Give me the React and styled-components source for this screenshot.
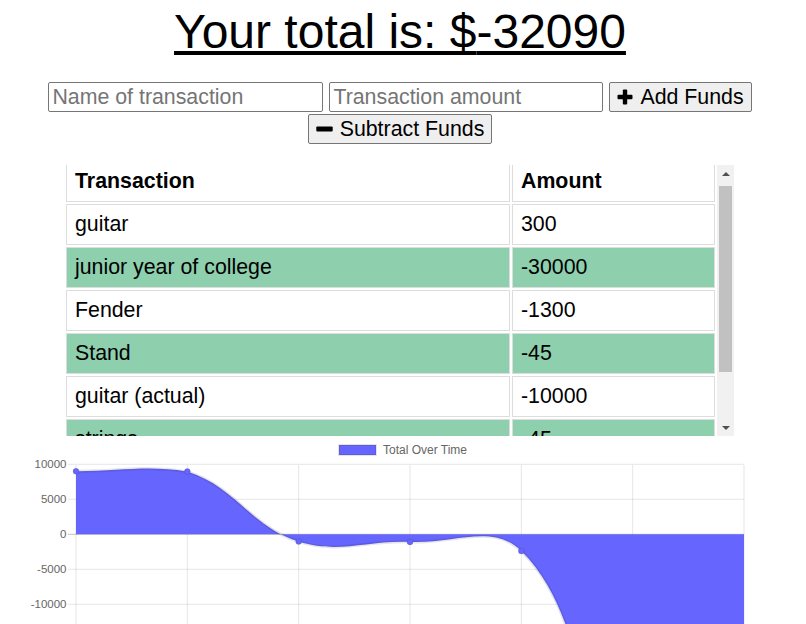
import React from 'react';
import styled, { createGlobalStyle } from 'styled-components';

const GlobalStyle = createGlobalStyle`
  html, body {
    margin: 0;
    padding: 0;
    background: #ffffff;
    overflow: hidden;
  }
  body {
    font-family: "Liberation Sans", Arial, sans-serif;
    color: #000;
  }
  #root {
    width: 800px;
  }
`;

const Page = styled.div`
  width: 800px;
  display: flex;
  flex-direction: column;
`;

const Total = styled.h1`
  margin: 4px 0 23px;
  font-size: 48px;
  font-weight: normal;
  line-height: normal;
  text-align: center;
  text-decoration: underline;
`;

const Form = styled.div`
  display: flex;
  flex-wrap: wrap;
  justify-content: center;
  gap: 2px 6px;
  padding: 0 40px;
`;

const Input = styled.input`
  box-sizing: border-box;
  width: ${p => p.$w}px;
  height: 30px;
  padding: 0 3px;
  border: 1px solid #767676;
  border-radius: 2px;
  font-family: "Liberation Sans", Arial, sans-serif;
  font-size: 21.33px;
  color: #000;
  outline: none;

  &::placeholder {
    color: #757575;
  }
`;

const Button = styled.button`
  box-sizing: border-box;
  height: 30px;
  display: inline-flex;
  align-items: center;
  gap: 7px;
  padding: 0 7px;
  background: #efefef;
  border: 1px solid #767676;
  border-radius: 2px;
  font-family: "Liberation Sans", Arial, sans-serif;
  font-size: 21.33px;
  color: #000;
  cursor: pointer;
`;

const TableFrame = styled.div`
  display: flex;
  width: 670px;
  height: 271px;
  margin: 21px 0 0 64px;
`;

const TableScroll = styled.div`
  flex: 1;
  overflow: hidden;
`;

const ScrollBar = styled.div`
  width: 17px;
  display: flex;
  flex-direction: column;
  background: #f1f1f1;
`;

const Arrow = styled.div`
  height: 17px;
  display: flex;
  align-items: center;
  justify-content: center;

  &::after {
    content: '';
    width: 0;
    height: 0;
    border-left: 4px solid transparent;
    border-right: 4px solid transparent;
    ${p => (p.$down ? 'border-top: 4px solid #505050;' : 'border-bottom: 4px solid #505050;')}
  }
`;

const Track = styled.div`
  flex: 1;
  padding: 4px 2px 0;
`;

const Thumb = styled.div`
  height: 186px;
  background: #c1c1c1;
`;

const Table = styled.table`
  width: 100%;
  margin-top: -6px;
  border-collapse: separate;
  border-spacing: 2px;
  font-size: 21.33px;
`;

const Cell = styled.td`
  box-sizing: border-box;
  padding: 7px 8px;
  line-height: 25px;
  border: 1px solid #dddddd;
  text-align: left;
  font-weight: ${p => (p.$head ? 'bold' : 'normal')};
  width: ${p => (p.$wide ? '444px' : 'auto')};
`;

const Row = styled.tr`
  background: ${p => (p.$green ? '#8ecfad' : '#ffffff')};
`;

const ChartBox = styled.svg`
  display: block;
  width: 800px;
  height: 188px;
`;

const PlusIcon = () => (
  <svg width="16" height="16" viewBox="0 0 16 16">
    <rect x="5.8" y="0.5" width="4.4" height="15" rx="1" fill="#000" />
    <rect x="0.5" y="5.8" width="15" height="4.4" rx="1" fill="#000" />
  </svg>
);

const MinusIcon = () => (
  <svg width="17" height="16" viewBox="0 0 17 16">
    <rect x="0.3" y="5.4" width="16.4" height="5" rx="1" fill="#000" />
  </svg>
);

const transactions = [
  { name: 'guitar', value: 300 },
  { name: 'junior year of college', value: -30000 },
  { name: 'Fender', value: -1300 },
  { name: 'Stand', value: -45 },
  { name: 'guitar (actual)', value: -10000 },
  { name: 'strings', value: -45 },
  { name: 'paycheck', value: 9000 },
];

// chart geometry (svg coords, page y minus 436)
const LEFT = 76;
const RIGHT = 744;
const TOP = 29;
const ZERO = 98.3;
const PER = 35 / 5000;
const yOf = v => ZERO - v * PER;

// same curve maths as chart.js line tension, control points kept inside the plot
function spline(points, t = 0.4) {
  const cap = p => ({ x: p.x, y: Math.max(TOP, p.y) });
  return points.map((cur, i) => {
    const prev = points[i - 1] || cur;
    const next = points[i + 1] || cur;
    const d01 = Math.hypot(cur.x - prev.x, cur.y - prev.y);
    const d12 = Math.hypot(next.x - cur.x, next.y - cur.y);
    let s01 = d01 / (d01 + d12);
    let s12 = d12 / (d01 + d12);
    if (isNaN(s01)) s01 = 0;
    if (isNaN(s12)) s12 = 0;
    const fa = t * s01;
    const fb = t * s12;
    return {
      ...cur,
      cp1: cap({ x: cur.x - fa * (next.x - prev.x), y: cur.y - fa * (next.y - prev.y) }),
      cp2: cap({ x: cur.x + fb * (next.x - prev.x), y: cur.y + fb * (next.y - prev.y) }),
    };
  });
}

const Chart = () => {
  const ordered = [...transactions].reverse();
  let sum = 0;
  const totals = ordered.map(t => (sum += t.value));
  const step = (RIGHT - LEFT) / (totals.length - 1);
  const pts = spline(totals.map((v, i) => ({ x: LEFT + i * step, y: yOf(v) })));

  let line = `M${pts[0].x},${pts[0].y}`;
  for (let i = 1; i < pts.length; i++) {
    const a = pts[i - 1];
    const b = pts[i];
    line += ` C${a.cp2.x},${a.cp2.y} ${b.cp1.x},${b.cp1.y} ${b.x},${b.y}`;
  }
  const area = `${line} L${RIGHT},${ZERO} L${LEFT},${ZERO} Z`;

  const ticks = [10000, 5000, 0, -5000, -10000, -15000];
  const vlines = Array.from({ length: 7 }, (_, i) => LEFT + i * step);

  return (
    <ChartBox viewBox="0 0 800 188">
      <rect x="339" y="9" width="37" height="10" fill="#6666ff" stroke="rgba(0,0,0,0.1)" strokeWidth="2" />
      <text x="383" y="18" fontSize="12" fill="#666" fontFamily="Liberation Sans, Arial, sans-serif">
        Total Over Time
      </text>
      {vlines.map(x => (
        <line key={x} x1={x} x2={x} y1={TOP} y2={188} stroke="rgba(0,0,0,0.1)" strokeWidth="1" />
      ))}
      {ticks.map(v => (
        <g key={v}>
          <line
            x1={68}
            x2={RIGHT}
            y1={yOf(v)}
            y2={yOf(v)}
            stroke={v === 0 ? 'rgba(0,0,0,0.25)' : 'rgba(0,0,0,0.1)'}
            strokeWidth="1"
          />
          <text
            x="66.5"
            y={yOf(v) + 4}
            textAnchor="end"
            fontSize="11.5"
            fill="#666"
            fontFamily="Liberation Sans, Arial, sans-serif"
          >
            {v}
          </text>
        </g>
      ))}
      <path d={area} fill="#6666ff" />
      <path d={line} fill="none" stroke="rgba(0,0,0,0.1)" strokeWidth="3" />
      {pts.map(p => (
        <circle key={p.x} cx={p.x} cy={p.y} r="3" fill="#6666ff" stroke="rgba(0,0,0,0.1)" strokeWidth="1" />
      ))}
    </ChartBox>
  );
};

const App = () => {
  const total = transactions.reduce((s, t) => s + t.value, 0);

  return (
    <Page>
      <GlobalStyle />
      <Total>Your total is: ${total}</Total>
      <Form>
        <Input $w={275} placeholder="Name of transaction" />
        <Input $w={274} placeholder="Transaction amount" type="number" />
        <Button>
          <PlusIcon />
          Add Funds
        </Button>
        <Button>
          <MinusIcon />
          Subtract Funds
        </Button>
      </Form>
      <TableFrame>
        <TableScroll>
          <Table>
            <thead>
              <tr>
                <Cell as="th" $head $wide>Transaction</Cell>
                <Cell as="th" $head>Amount</Cell>
              </tr>
            </thead>
            <tbody>
              {transactions.map((t, i) => (
                <Row key={t.name} $green={i % 2 === 1}>
                  <Cell $wide>{t.name}</Cell>
                  <Cell>{t.value}</Cell>
                </Row>
              ))}
            </tbody>
          </Table>
        </TableScroll>
        <ScrollBar>
          <Arrow />
          <Track>
            <Thumb />
          </Track>
          <Arrow $down />
        </ScrollBar>
      </TableFrame>
      <Chart />
    </Page>
  );
};

export default App;
